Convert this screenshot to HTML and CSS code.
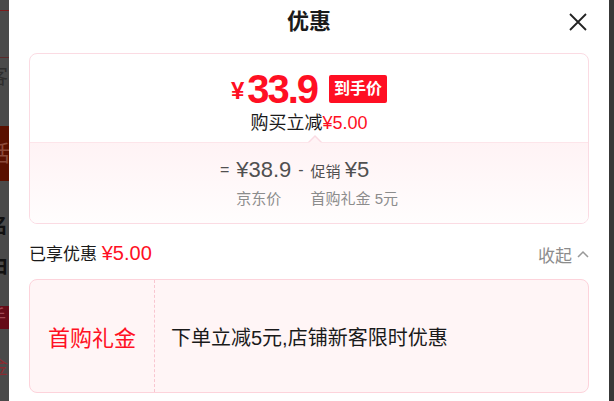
FILE: index.html
```html
<!DOCTYPE html>
<html lang="zh-CN">
<head>
  <meta charset="UTF-8" />
  <meta name="viewport" content="width=device-width, initial-scale=1.0"/>
  <title>优惠</title>
  <link rel="stylesheet" href="styles.css">
</head>
<body>

  <div class="page">
    <!-- dimmed product page behind the sheet -->
    <div class="backdrop">
      <div class="bd-rule bd-rule-red"></div>
      <div class="bd-rule bd-rule-dark"></div>
      <div class="bd-text bd-gray">客</div>
      <div class="bd-block">话</div>
      <div class="bd-text bd-black bd-first">名</div>
      <div class="bd-text bd-black bd-second">由</div>
      <div class="bd-block bd-block-small">手</div>
      <div class="bd-text bd-red">金</div>
    </div>

    <div class="sheet">
      <div class="sheet-head">
        <span></span>
        <h2 class="sheet-title">优惠</h2>
        <button class="close-btn" aria-label="关闭">
          <svg width="18" height="18" viewBox="0 0 18 18">
            <path d="M1 1 L17 17 M17 1 L1 17" stroke="#222" stroke-width="1.8" fill="none"/>
          </svg>
        </button>
      </div>

      <div class="price-card">
        <div class="price-top">
          <div class="price-row">
            <span class="price-sym">¥</span>
            <span class="price-num">33.9</span>
            <span class="price-tag">到手价</span>
          </div>
          <div class="price-sub">购买立减<span class="red">¥5.00</span></div>
        </div>
        <div class="price-calc">
          <div class="calc-grid">
            <span class="op">=</span>
            <span class="val">¥38.9</span>
            <span class="op">-</span>
            <span class="val"><span class="val-note">促销 </span>¥5</span>
            <span></span>
            <span class="lbl">京东价</span>
            <span></span>
            <span class="lbl">首购礼金 5元</span>
          </div>
        </div>
      </div>

      <div class="saved-row">
        <div class="saved">已享优惠 <span class="red saved-amount">¥5.00</span></div>
        <div class="fold">收起
          <svg width="12" height="8" viewBox="0 0 12 8">
            <path d="M1 7 L6 2 L11 7" stroke="#999" stroke-width="1.5" fill="none"/>
          </svg>
        </div>
      </div>

      <div class="coupon">
        <div class="coupon-name">首购礼金</div>
        <div class="coupon-desc">下单立减5元,店铺新客限时优惠</div>
      </div>
    </div>

    <div class="scrollbar"></div>
  </div>

</body>
</html>
```

FILE: styles.css
```css
* {
  box-sizing: border-box;
}

body {
  margin: 0;
  height: 401px;
  overflow: hidden;
  font-family: "Liberation Sans", "Noto Sans CJK SC", sans-serif;
  color: #1a1a1a;
}

.page {
  display: flex;
  height: 401px;
}

.red {
  color: #ff0f23;
}

/* backdrop */
.backdrop {
  width: 9px;
  flex: none;
  background-color: #4a4a4a;
  overflow: hidden;
  display: flex;
  flex-direction: column;
}

.bd-rule {
  height: 1px;
}

.bd-rule-red { margin-top: 10px; background-color: #7c1c1c; }
.bd-rule-dark { margin-top: 46px; background-color: #5a2a2a; }

.bd-text {
  margin-left: -12px;
  font-size: 20px;
  line-height: 20px;
  white-space: nowrap;
}

.bd-gray { margin-top: 9px; color: #2e2e2e; }
.bd-black { color: #111; font-weight: bold; line-height: 24px; }
.bd-first { margin-top: 33px; }
.bd-second { margin-top: 16px; }
.bd-red { margin-top: 27px; color: #8a2a30; line-height: 23px; }

.bd-block {
  margin-top: 39px;
  height: 55px;
  padding-left: 0;
  background-color: #5a1000;
  color: #8c4a3a;
  font-size: 22px;
  line-height: 55px;
  text-indent: -12px;
  white-space: nowrap;
}

.bd-block-small {
  margin-top: 28px;
  height: 23px;
  background-color: #650c18;
  color: #a04a55;
  font-size: 18px;
  line-height: 23px;
}

.scrollbar {
  width: 5px;
  flex: none;
  background-color: #383838;
}

/* sheet */
.sheet {
  width: 600px;
  flex: none;
  background-color: #fff;
  padding: 0 20px;
}

.sheet-head {
  display: grid;
  grid-template-columns: 1fr auto 1fr;
  align-items: center;
  height: 44px;
  margin-bottom: 9px;
}

.sheet-title {
  margin: 0;
  font-size: 22px;
  font-weight: bold;
  line-height: 44px;
  color: #1a1a1a;
}

.close-btn {
  justify-self: end;
  margin-right: 2px;
  padding: 0;
  border: none;
  background: none;
  display: flex;
}

/* price card */
.price-card {
  border: 1px solid #fbdbe3;
  border-radius: 8px;
  overflow: hidden;
}

.price-top {
  padding: 15px 0 7px;
  display: flex;
  flex-direction: column;
  align-items: center;
}

.price-row {
  display: flex;
  align-items: center;
  height: 40px;
  color: #ff0f23;
}

.price-sym {
  font-size: 24px;
  font-weight: bold;
  line-height: 24px;
  margin-top: 4px;
  margin-right: 3px;
}

.price-num {
  font-size: 40px;
  font-weight: bold;
  line-height: 40px;
  letter-spacing: -2px;
}

.price-tag {
  margin-left: 12px;
  padding: 0 5px;
  height: 28px;
  border-radius: 2px;
  background-color: #ff0f23;
  color: #fff;
  font-size: 16px;
  font-weight: bold;
  line-height: 28px;
}

.price-sub {
  margin-top: 2px;
  font-size: 18px;
  line-height: 24px;
}

.price-calc {
  position: relative;
  border-top: 1px solid #fde5ea;
  background: linear-gradient(#fff3f5, #fffdfd);
  padding: 13px 0 14px;
  display: flex;
  justify-content: center;
}

.price-calc::before,
.price-calc::after {
  content: "";
  position: absolute;
  width: 0;
  height: 0;
}

.price-calc::before {
  top: -8px;
  left: 278px;
  border-left: 7px solid transparent;
  border-right: 7px solid transparent;
  border-bottom: 7px solid #fbdbe3;
}

.price-calc::after {
  top: -6px;
  left: 279px;
  border-left: 6px solid transparent;
  border-right: 6px solid transparent;
  border-bottom: 6px solid #fff4f6;
}

.calc-grid {
  display: grid;
  grid-template-columns: auto auto auto auto;
  column-gap: 7px;
  row-gap: 3px;
  color: #505050;
}

.op {
  font-size: 16px;
  line-height: 28px;
}

.val {
  font-size: 22px;
  line-height: 28px;
  white-space: nowrap;
}

.val-note {
  font-size: 15px;
}

.lbl {
  font-size: 15px;
  line-height: 20px;
  color: #8c8c8c;
  white-space: nowrap;
}

/* saved row */
.saved-row {
  margin-top: 16px;
  display: flex;
  justify-content: space-between;
  align-items: center;
  height: 28px;
}

.saved {
  font-size: 17px;
  line-height: 28px;
}

.saved-amount {
  font-size: 20px;
}

.fold {
  display: flex;
  align-items: center;
  gap: 5px;
  font-size: 17px;
  color: #8c8c8c;
}

/* coupon */
.coupon {
  margin-top: 11px;
  height: 114px;
  display: flex;
  border: 1px solid #fdd3db;
  border-radius: 8px;
  background-color: #fff5f6;
}

.coupon-name {
  width: 125px;
  flex: none;
  border-right: 1px dashed #f8c6d0;
  display: flex;
  align-items: center;
  justify-content: center;
  font-size: 22px;
  color: #ff0f23;
}

.coupon-desc {
  display: flex;
  align-items: center;
  padding-left: 16px;
  font-size: 20px;
  color: #1a1a1a;
}
```
